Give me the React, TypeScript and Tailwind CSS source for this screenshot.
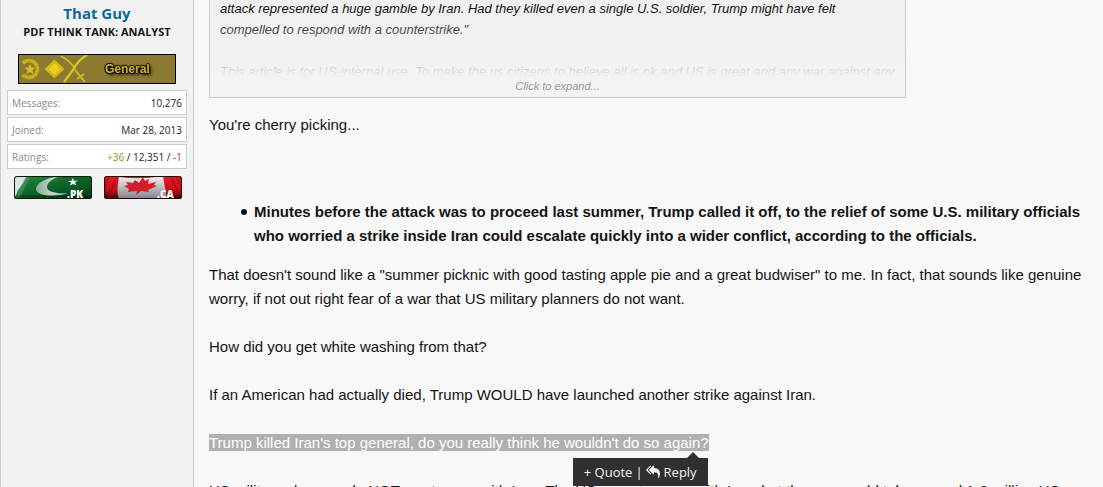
import React from 'react';

const stats = [
  { label: 'Messages:', value: '10,276' },
  { label: 'Joined:', value: 'Mar 28, 2013' },
];

function RankBanner() {
  return (
    <div className="mx-auto mt-[13px] flex h-[30px] w-[158px] items-center border border-black bg-[#8b7a32]">
      <svg viewBox="0 0 70 28" className="h-7 w-[70px]" aria-hidden="true">
        <path
          d="M4 8A8.500 8.500 0 1 1 4 20"
          fill="none"
          stroke="#bfa41c"
          strokeWidth="4"
        />
        <path
          d="M4 8A8.500 8.500 0 1 1 4 20"
          fill="none"
          stroke="#d8be2c"
          strokeWidth="1.500"
          strokeDasharray="2 1.500"
        />
        <path d="M11 9l1.500 3.300 3.700.4-2.800 2.500.8 3.700-3.200-1.900-3.200 1.900.8-3.700-2.800-2.500 3.700-.4z" fill="#d8bc22" />
        <path d="M35.500 4.500L45.500 14l-10 9.500L25.500 14z" fill="#d6b90c" />
        <path d="M35.500 8l5.500 6-5.500 6-5.500-6z" fill="#e8d02a" />
        <path d="M42 1Q53 7 57 16l7 9" fill="none" stroke="#d6ba22" strokeWidth="1.800" />
        <path d="M68 0Q59 5 54 15L45 27" fill="none" stroke="#e0c61d" strokeWidth="2.200" />
        <path d="M58 24l7-5M63 23l3 4" stroke="#d6ba22" strokeWidth="1.600" />
      </svg>
      <span className="ml-4 font-['Liberation_Sans'] text-xs leading-none font-bold text-[#d0b52c] [text-shadow:1px_0_1px_#000,-1px_0_1px_#000,0_1px_1px_#000,0_-1px_1px_#000,2px_2px_3px_#000]">
        General
      </span>
    </div>
  );
}

function FlagPakistan() {
  return (
    <svg viewBox="0 0 78 23" className="h-[23px] w-[78px]" role="img" aria-label="Pakistan">
      <defs>
        <linearGradient id="pk" x1="0" x2="1" y1="0" y2="1">
          <stop offset="0" stopColor="#2d8a3e" />
          <stop offset=".5" stopColor="#0b6428" />
          <stop offset="1" stopColor="#053a14" />
        </linearGradient>
        <linearGradient id="pkm" x1="0" x2="1" y1="0" y2="0">
          <stop offset="0" stopColor="#7fae96" />
          <stop offset=".5" stopColor="#c4d6ce" />
          <stop offset="1" stopColor="#8cb8a0" />
        </linearGradient>
        <clipPath id="pkc"><rect width="78" height="23" rx="2.500" /></clipPath>
      </defs>
      <g clipPath="url(#pkc)">
        <rect width="78" height="23" fill="url(#pk)" />
        <path d="M0 0H13Q9 9 4 14L1 22H0Z" fill="#dce3e6" />
        <path d="M12 0h5L5 23H0z" fill="#5b9b68" opacity=".5" />
        <path d="M44 1C34 1 22 7 22 13c0 7 19 9 32 4-11 1-21-1-21-6 0-4 5-8 11-10z" fill="url(#pkm)" />
        <path d="M59 2l1 3 4-.5-3 2 1.500 3-3.500-1.500-3 1.500 1-3-3-1.500 3.500-.3z" fill="#f4f8f4" />
        <rect y="19" width="78" height="4" fill="#000" opacity=".25" />
      </g>
      <rect x=".5" y=".5" width="77" height="22" rx="2.500" fill="none" stroke="#061a0b" />
      <text x="53" y="22" fontFamily="Open Sans" fontWeight="800" fontSize="10" fill="#fff">.PK</text>
    </svg>
  );
}

function FlagCanada() {
  return (
    <svg viewBox="0 0 78 23" className="h-[23px] w-[78px]" role="img" aria-label="Canada">
      <defs>
        <linearGradient id="ca" x1="0" x2="0" y1="0" y2="1">
          <stop offset="0" stopColor="#e51c25" />
          <stop offset=".6" stopColor="#c80c16" />
          <stop offset="1" stopColor="#3c0407" />
        </linearGradient>
        <linearGradient id="caw" x1="0" x2="0" y1="0" y2="1">
          <stop offset="0" stopColor="#f5f3f5" />
          <stop offset="1" stopColor="#85808e" />
        </linearGradient>
        <clipPath id="cac"><rect width="78" height="23" rx="2.500" /></clipPath>
      </defs>
      <g clipPath="url(#cac)">
        <rect width="78" height="23" fill="url(#ca)" />
        <path d="M15 1Q36 4 59 0l4 23H15q-3-8 0-22z" fill="url(#caw)" />
        <path d="M39 1l2 4 4-2-1 5 8-2-2 3 3 1-9 4 1 2-8-1-5 4 1-4-9 1 1-3-5-3 4-1-2-3 7 1 2-3 4 3z" fill="#d02029" />
        <path d="M5 0L0 13M12 2L4 23M67 2l7 14M72 0l5 9" stroke="#8f0911" strokeWidth="1.500" opacity=".5" />
      </g>
      <rect x=".5" y=".5" width="77" height="22" rx="2.500" fill="none" stroke="#250508" />
      <text x="53" y="22" fontFamily="Open Sans" fontWeight="800" fontSize="10" fill="#fff">.CA</text>
    </svg>
  );
}

function UserPanel() {
  return (
    <aside className="w-[194px] shrink-0 border-x border-[#cccccc] bg-[#f2f2f2] px-1.5 pt-[3px] text-center">
      <a href="#user" className="block text-[15px] leading-5 font-bold text-[#0868a0]">That Guy</a>
      <div className="text-[11px] leading-[18px] font-bold text-[#141414]">PDF THINK TANK: ANALYST</div>
      <RankBanner />
      <dl className="mt-1.5 flex flex-col gap-0.5 text-[10px] leading-[21px]">
        {stats.map((s) => (
          <div key={s.label} className="flex justify-between border border-[#cccccc] bg-white px-1 pt-0.5">
            <dt className="text-[#888888]">{s.label}</dt>
            <dd className="text-[#222222]">{s.value}</dd>
          </div>
        ))}
        <div className="flex justify-between border border-[#cccccc] bg-white px-1 pt-0.5">
          <dt className="text-[#888888]">Ratings:</dt>
          <dd className="text-[#222222]">
            <span className="text-[#6aa821]">+36</span> / 12,351 / <span className="text-[#c8402c]">-1</span>
          </dd>
        </div>
      </dl>
      <div className="mt-[7px] flex gap-3 pl-[7px]">
        <FlagPakistan />
        <FlagCanada />
      </div>
    </aside>
  );
}

function QuoteBox() {
  return (
    <blockquote className="relative mr-[197px] h-[98px] overflow-hidden border border-t-0 border-[#cccccc] bg-[#f0f0f0] px-2.5 text-[13px] leading-[21px] text-[#141414] italic">
      <p className="-mt-0.5">
        attack represented a huge gamble by Iran. Had they killed even a single U.S. soldier, Trump might have felt
        <br />
        compelled to respond with a counterstrike."
        <br />
        <br />
        This article is for US-internal use. To make the us citizens to believe all is ok and US is great and any war against any
      </p>
      <div className="absolute inset-x-0 bottom-0 flex h-20 items-end justify-center bg-linear-to-b from-[#f3f3f3]/0 to-[#f3f3f3] to-75% pb-1">
        <button type="button" className="text-[11px] leading-[14px] text-[#999999] italic">Click to expand...</button>
      </div>
    </blockquote>
  );
}

function SelectionMenu() {
  return (
    <div className="absolute top-full right-px z-10 mt-[7px] flex h-7 items-center gap-[3px] bg-[#303030] px-[11px] font-['Open_Sans'] text-[13px] whitespace-nowrap text-[#f3f3f3]">
      <span className="absolute right-[9px] bottom-full border-x-[6px] border-b-[6px] border-x-transparent border-b-[#303030]" />
      <button type="button">+ Quote</button>
      <span>|</span>
      <button type="button" className="flex items-center gap-1">
        <svg viewBox="0 0 1792 1792" className="size-3.5" fill="currentColor" aria-hidden="true">
          <path d="M640 1082v70q0 42-39 59-13 5-25 5-27 0-45-19L19 685q-19-19-19-45t19-45L531 83q29-31 70-14 39 17 39 59v69L243 595q-19 19-19 45t19 45zm1152 58q0 58-17 133.500t-38.500 138-48 125-40.500 90.500l-20 40q-8 17-28 17-6 0-9-1-25-8-23-34 43-400-106-565-64-71-170.500-110.500T1024 923v229q0 42-39 59-13 5-25 5-27 0-45-19L403 685q-19-19-19-45t19-45L915 83q29-31 70-14 39 17 39 59v262q411 28 599 221 169 173 169 509z" />
        </svg>
        Reply
      </button>
    </div>
  );
}

export default function App() {
  return (
    <div className="flex h-screen overflow-hidden bg-[#f8f8f8] font-['Open_Sans',sans-serif]">
      <UserPanel />
      <main className="min-w-0 flex-1 pl-[15px] font-['Liberation_Sans',sans-serif] text-[15px] leading-6 text-[#141414]">
        <QuoteBox />
        <article className="mt-[15px] pr-3">
          <p>You're cherry picking...</p>
          <ul className="mt-[63px] mb-[15px] pl-8 font-bold">
            <li className="flex gap-[7px]">
              <span className="mt-[9px] size-1.5 shrink-0 rounded-full bg-[#141414]" />
              <span>
                Minutes before the attack was to proceed last summer, Trump called it off, to the relief of some U.S. military officials who worried a strike inside Iran could escalate quickly into a wider conflict, according to the officials.
              </span>
            </li>
          </ul>
          <div className="flex flex-col gap-6">
            <p>
              That doesn't sound like a "summer picknic with good tasting apple pie and a great budwiser" to me. In fact, that sounds like genuine worry, if not out right fear of a war that US military planners do not want.
            </p>
            <p>How did you get white washing from that?</p>
            <p>If an American had actually died, Trump WOULD have launched another strike against Iran.</p>
            <p>
              <span className="relative bg-[#b0b0b0] text-white">
                Trump killed Iran's top general, do you really think he wouldn't do so again?
                <SelectionMenu />
              </span>
            </p>
            <p>
              US military planners do NOT want a war with Iran. The US can win a war with Iran, but the war would take around 1-2 million US
            </p>
          </div>
        </article>
      </main>
    </div>
  );
}
